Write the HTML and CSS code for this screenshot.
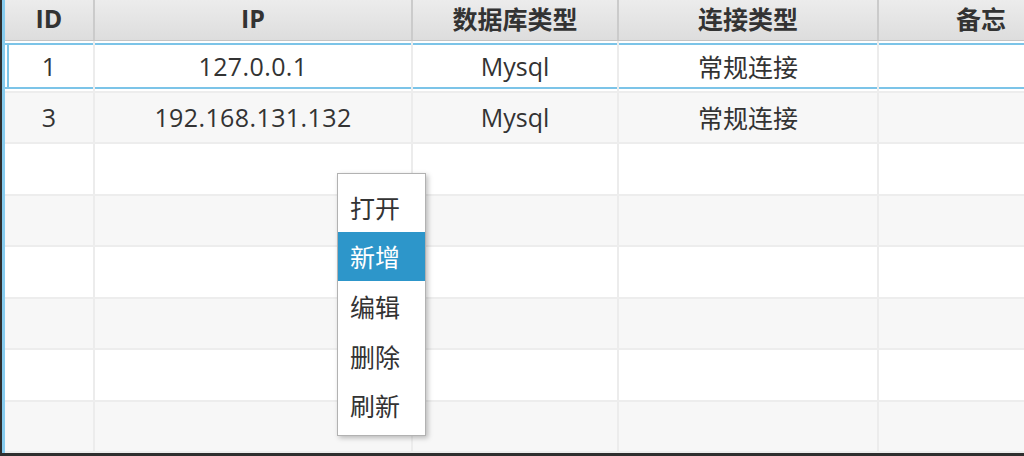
FILE: index.html
```html
<!DOCTYPE html>
<html lang="zh-CN">
<head>
<meta charset="utf-8">
<title>连接列表</title>
<link rel="stylesheet" href="styles.css">
</head>
<body>
<div class="frame">
  <div class="table">
    <div class="row header">
      <div class="cell">ID</div>
      <div class="cell">IP</div>
      <div class="cell">数据库类型</div>
      <div class="cell">连接类型</div>
      <div class="cell">备忘</div>
    </div>
    <div class="row odd selected">
      <div class="cell first">1</div>
      <div class="cell num">127.0.0.1</div>
      <div class="cell">Mysql</div>
      <div class="cell">常规连接</div>
      <div class="cell"></div>
    </div>
    <div class="row even">
      <div class="cell">3</div>
      <div class="cell num">192.168.131.132</div>
      <div class="cell">Mysql</div>
      <div class="cell">常规连接</div>
      <div class="cell"></div>
    </div>
    <div class="row odd"><div class="cell"></div><div class="cell"></div><div class="cell"></div><div class="cell"></div><div class="cell"></div></div>
    <div class="row even"><div class="cell"></div><div class="cell"></div><div class="cell"></div><div class="cell"></div><div class="cell"></div></div>
    <div class="row odd"><div class="cell"></div><div class="cell"></div><div class="cell"></div><div class="cell"></div><div class="cell"></div></div>
    <div class="row even"><div class="cell"></div><div class="cell"></div><div class="cell"></div><div class="cell"></div><div class="cell"></div></div>
    <div class="row odd"><div class="cell"></div><div class="cell"></div><div class="cell"></div><div class="cell"></div><div class="cell"></div></div>
    <div class="row even"><div class="cell"></div><div class="cell"></div><div class="cell"></div><div class="cell"></div><div class="cell"></div></div>
  </div>
  <ul class="menu">
    <li class="item">打开</li>
    <li class="item active">新增</li>
    <li class="item">编辑</li>
    <li class="item">删除</li>
    <li class="item">刷新</li>
  </ul>
</div>
</body>
</html>
```
FILE: styles.css
```css
html, body {
  margin: 0;
  padding: 0;
  width: 1024px;
  height: 456px;
  overflow: hidden;
  background: #2e2e2e;
}

.frame {
  position: relative;
  box-sizing: border-box;
  width: 1024px;
  height: 456px;
  border-left: 2px solid #2e2e2e;
  border-bottom: 3px solid #2e2e2e;
  background: #ffffff;
  font-family: "Open Sans", "Noto Sans CJK SC", sans-serif;
  font-size: 25px;
  color: #333333;
  overflow: hidden;
}

.table {
  box-sizing: border-box;
  height: 100%;
  border-left: 3px solid #86cbee;
  overflow: hidden;
}

.row {
  display: grid;
  grid-template-columns: 90px 318px 206px 260px 206px;
  box-sizing: border-box;
  height: 51.5px;
  border-bottom: 2px solid #ededed;
}

.cell {
  box-sizing: border-box;
  border-right: 2px solid #ececec;
  display: flex;
  align-items: center;
  justify-content: center;
  white-space: nowrap;
}

.num {
  letter-spacing: 0.4px;
}

.header {
  height: 41px;
  border-bottom: 1px solid #c4c4c4;
  background: linear-gradient(#ececec, #dddddd);
  font-weight: 700;
  color: #333333;
}

.header .cell {
  border-right: 2px solid #cbcbcb;
  padding-bottom: 4px;
}

.odd { background: #ffffff; }
.even { background: #f7f7f7; }

.selected .cell {
  background-image: linear-gradient(to bottom,
    transparent 2px, #7cc4e8 2px, #7cc4e8 4px, transparent 4px,
    transparent calc(100% - 4px), #7cc4e8 calc(100% - 4px),
    #7cc4e8 calc(100% - 2px), transparent calc(100% - 2px));
}

.selected .cell.first {
  background-image:
    linear-gradient(to right, transparent 2px, #7cc4e8 2px, #7cc4e8 4px, transparent 4px),
    linear-gradient(to bottom,
    transparent 2px, #7cc4e8 2px, #7cc4e8 4px, transparent 4px,
    transparent calc(100% - 4px), #7cc4e8 calc(100% - 4px),
    #7cc4e8 calc(100% - 2px), transparent calc(100% - 2px));
  background-size: 100% calc(100% - 4px), 100% 100%;
  background-position: 0 2px, 0 0;
  background-repeat: no-repeat;
}

.menu {
  position: absolute;
  left: 335px;
  top: 173px;
  width: 89px;
  box-sizing: border-box;
  margin: 0;
  padding: 8px 0 5px;
  list-style: none;
  background: #ffffff;
  border: 1px solid #b2b2b2;
  box-shadow: 2px 2px 5px rgba(0, 0, 0, 0.25);
}

.item {
  height: 49.6px;
  display: flex;
  align-items: center;
  padding-left: 12px;
  color: #333333;
}

.item.active {
  background: #2d96ca;
  color: #ffffff;
}
```
